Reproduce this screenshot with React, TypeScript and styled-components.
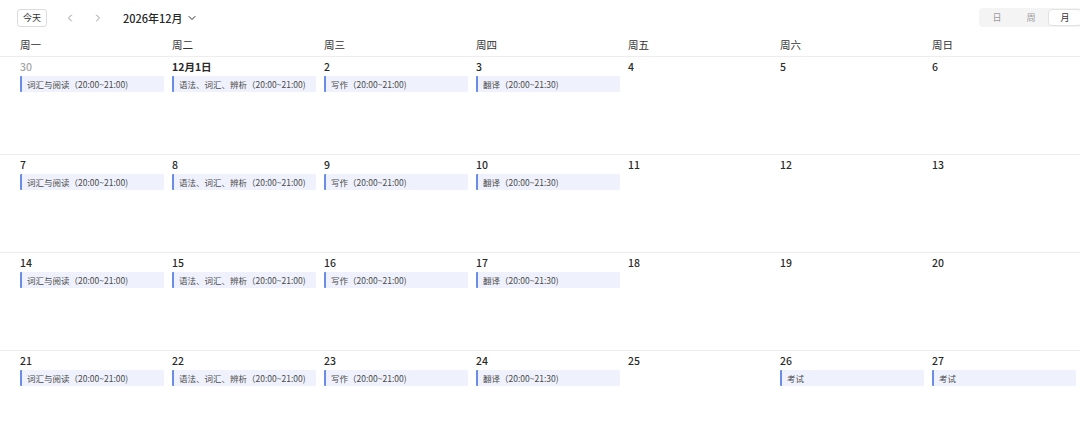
import React from "react";
import styled, { createGlobalStyle } from "styled-components";

const Global = createGlobalStyle`
  html, body { margin: 0; padding: 0; background: #fff; overflow: hidden; }
  body { font-family: "Noto Sans CJK SC", "Inter", "Noto Sans", sans-serif; color: #262626; }
  * { box-sizing: border-box; }
`;

const Page = styled.div`
  width: 1080px;
  height: 429px;
  overflow: hidden;
  display: flex;
  flex-direction: column;
`;

const Toolbar = styled.div`
  height: 35px;
  flex-shrink: 0;
  display: flex;
  align-items: center;
  padding: 0 0 0 17px;
`;

const TodayButton = styled.button`
  height: 18px;
  width: 30px;
  padding: 0;
  border: 1px solid #dcdcdc;
  border-radius: 3px;
  background: #fff;
  font-family: inherit;
  font-size: 9px;
  color: #333;
  display: flex;
  align-items: center;
  justify-content: center;
`;

const NavButton = styled.span`
  width: 28px;
  display: flex;
  justify-content: center;
  align-items: center;
  color: #999;
  height: 18px;
`;

const NavGroup = styled.div`
  display: flex;
  margin-left: 9px;
`;

const MonthTitle = styled.div`
  margin-left: 11px;
  display: flex;
  align-items: center;
  gap: 4px;
  font-size: 11px;
  font-weight: 500;
  color: #262626;
`;

const Spacer = styled.div`
  flex: 1;
`;

const Segmented = styled.div`
  display: flex;
  background: #f4f4f5;
  border-radius: 4px;
  padding: 1px 0 1px 1px;
  height: 19px;
  margin-right: -2px;
`;

const Segment = styled.div<{ $active?: boolean }>`
  width: 34px;
  display: flex;
  align-items: center;
  justify-content: center;
  font-size: 9px;
  color: ${(p) => (p.$active ? "#333" : "#9a9a9a")};
  background: ${(p) => (p.$active ? "#fff" : "transparent")};
  border: 1px solid ${(p) => (p.$active ? "#e2e2e2" : "transparent")};
  border-radius: 4px;
`;

const HeaderRow = styled.div`
  display: grid;
  grid-template-columns: repeat(7, 152px);
  margin-left: 16px;
  height: 21px;
  flex-shrink: 0;
  align-items: center;
`;

const HeaderCell = styled.div`
  padding-left: 4px;
  font-size: 10.5px;
  color: #333;
  line-height: 1;
`;

const WeekRow = styled.div`
  display: grid;
  grid-template-columns: 16px repeat(7, 152px);
  height: 98px;
  border-top: 1px solid #ededed;
  flex-shrink: 0;
`;

const Gutter = styled.div``;

const DayCell = styled.div`
  padding: 3px 4px 0 4px;
  display: flex;
  flex-direction: column;
`;

const DayNum = styled.div<{ $muted?: boolean; $bold?: boolean }>`
  font-size: 10.5px;
  line-height: 14px;
  height: 14px;
  font-weight: ${(p) => (p.$bold ? 600 : 500)};
  color: ${(p) => (p.$muted ? "#a6a6a6" : "#2a2a2a")};
`;

const Event = styled.div`
  margin-top: 2px;
  height: 16px;
  background: #eff2fc;
  border-left: 2px solid #6a8ce6;
  border-radius: 1px;
  padding-left: 5px;
  display: flex;
  align-items: center;
  font-size: 8.5px;
  color: #4a4a4a;
  white-space: nowrap;
  overflow: hidden;
`;

const Chevron = ({ dir }: { dir: "left" | "right" | "down" }) => {
  const d =
    dir === "left" ? "M6.5 2 L3.5 5 L6.5 8" : dir === "right" ? "M3.5 2 L6.5 5 L3.5 8" : "M2 3.5 L5 6.5 L8 3.5";
  return (
    <svg width="10" height="10" viewBox="0 0 10 10" fill="none">
      <path d={d} stroke="currentColor" strokeWidth="1" strokeLinecap="round" strokeLinejoin="round" />
    </svg>
  );
};

type Day = { label: string; muted?: boolean; bold?: boolean; event?: string };

const mon = "词汇与阅读（20:00~21:00)";
const tue = "语法、词汇、辨析（20:00~21:00)";
const wed = "写作（20:00~21:00)";
const thu = "翻译（20:00~21:30)";

const weeks: Day[][] = [
  [
    { label: "30", muted: true, event: mon },
    { label: "12月1日", bold: true, event: tue },
    { label: "2", event: wed },
    { label: "3", event: thu },
    { label: "4" },
    { label: "5" },
    { label: "6" },
  ],
  [
    { label: "7", event: mon },
    { label: "8", event: tue },
    { label: "9", event: wed },
    { label: "10", event: thu },
    { label: "11" },
    { label: "12" },
    { label: "13" },
  ],
  [
    { label: "14", event: mon },
    { label: "15", event: tue },
    { label: "16", event: wed },
    { label: "17", event: thu },
    { label: "18" },
    { label: "19" },
    { label: "20" },
  ],
  [
    { label: "21", event: mon },
    { label: "22", event: tue },
    { label: "23", event: wed },
    { label: "24", event: thu },
    { label: "25" },
    { label: "26", event: "考试" },
    { label: "27", event: "考试" },
  ],
];

const weekdays = ["周一", "周二", "周三", "周四", "周五", "周六", "周日"];

export default function App() {
  return (
    <>
      <Global />
      <Page>
        <Toolbar>
          <TodayButton>今天</TodayButton>
          <NavGroup>
            <NavButton>
              <Chevron dir="left" />
            </NavButton>
            <NavButton>
              <Chevron dir="right" />
            </NavButton>
          </NavGroup>
          <MonthTitle>
            2026年12月
            <Chevron dir="down" />
          </MonthTitle>
          <Spacer />
          <Segmented>
            <Segment>日</Segment>
            <Segment>周</Segment>
            <Segment $active>月</Segment>
          </Segmented>
        </Toolbar>
        <HeaderRow>
          {weekdays.map((w) => (
            <HeaderCell key={w}>{w}</HeaderCell>
          ))}
        </HeaderRow>
        {weeks.map((week, i) => (
          <WeekRow key={i}>
            <Gutter />
            {week.map((d) => (
              <DayCell key={d.label}>
                <DayNum $muted={d.muted} $bold={d.bold}>
                  {d.label}
                </DayNum>
                {d.event && <Event>{d.event}</Event>}
              </DayCell>
            ))}
          </WeekRow>
        ))}
      </Page>
    </>
  );
}
